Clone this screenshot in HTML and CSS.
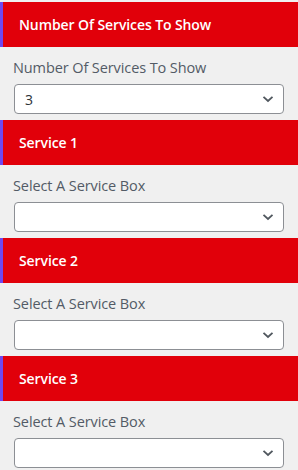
FILE: index.html
```html
<!DOCTYPE html>
<html lang="en">
<head>
	<meta charset="UTF-8">
	<title>Services</title>
	<link rel="stylesheet" href="styles.css">
</head>
<body>
	<div class="panel">
		<div class="group">
			<div class="group-head">Number Of Services To Show</div>
			<div class="group-body">
				<label class="field-label">Number Of Services To Show</label>
				<div class="select">
					<span class="select-value">3</span>
					<svg class="chevron" width="12" height="8" viewBox="0 0 12 8"><path d="M1.5 1.8 L6 6 L10.5 1.8" fill="none" stroke="#50575e" stroke-width="1.8"/></svg>
				</div>
			</div>
		</div>
		<div class="group">
			<div class="group-head">Service 1</div>
			<div class="group-body">
				<label class="field-label">Select A Service Box</label>
				<div class="select">
					<span class="select-value"></span>
					<svg class="chevron" width="12" height="8" viewBox="0 0 12 8"><path d="M1.5 1.8 L6 6 L10.5 1.8" fill="none" stroke="#50575e" stroke-width="1.8"/></svg>
				</div>
			</div>
		</div>
		<div class="group">
			<div class="group-head">Service 2</div>
			<div class="group-body">
				<label class="field-label">Select A Service Box</label>
				<div class="select">
					<span class="select-value"></span>
					<svg class="chevron" width="12" height="8" viewBox="0 0 12 8"><path d="M1.5 1.8 L6 6 L10.5 1.8" fill="none" stroke="#50575e" stroke-width="1.8"/></svg>
				</div>
			</div>
		</div>
		<div class="group">
			<div class="group-head">Service 3</div>
			<div class="group-body">
				<label class="field-label">Select A Service Box</label>
				<div class="select">
					<span class="select-value"></span>
					<svg class="chevron" width="12" height="8" viewBox="0 0 12 8"><path d="M1.5 1.8 L6 6 L10.5 1.8" fill="none" stroke="#50575e" stroke-width="1.8"/></svg>
				</div>
			</div>
		</div>
	</div>
</body>
</html>
```

FILE: styles.css
```css
* {
	margin: 0;
	padding: 0;
	box-sizing: border-box;
}

body {
	background: #f0f0f0;
	font-family: "Open Sans", "Noto Sans", sans-serif;
}

.panel {
	padding-top: 2px;
}

.group {
	height: 118px;
}

.group-head {
	height: 45px;
	padding-left: 16px;
	border-left: 3px solid #7048f0;
	background: #e1000a;
	color: #fff;
	font-size: 14px;
	font-weight: 600;
	letter-spacing: -0.1px;
	line-height: 45px;
}

.group-body {
	padding: 0 14px;
}

.field-label {
	display: block;
	margin-left: -1px;
	padding-top: 11px;
	height: 37px;
	color: #535b66;
	font-size: 14.5px;
	letter-spacing: -0.1px;
	line-height: 20px;
}

.select {
	display: flex;
	align-items: center;
	justify-content: space-between;
	height: 30px;
	padding: 0 9px 0 10px;
	background: #fff;
	border: 1px solid #8c8f94;
	border-radius: 4px;
	color: #2c3338;
	font-size: 14px;
}
```
